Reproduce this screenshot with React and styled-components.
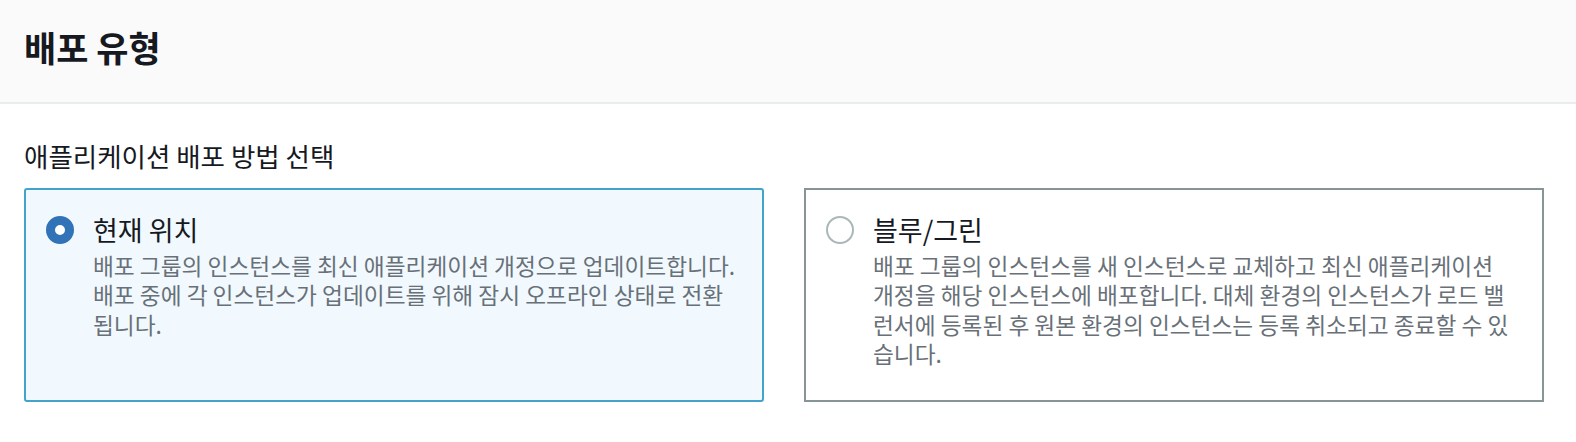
import React, { useState } from 'react'
import styled, { createGlobalStyle } from 'styled-components'

const GlobalStyle = createGlobalStyle`
  html, body {
    margin: 0;
    padding: 0;
    background: #ffffff;
  }
  body {
    font-family: "Noto Sans CJK KR", "Noto Sans", sans-serif;
    color: #16191f;
  }
`

// lines kept as in the console so the wrap matches
const options = [
  {
    id: 'in-place',
    title: '현재 위치',
    lines: [
      '배포 그룹의 인스턴스를 최신 애플리케이션 개정으로 업데이트합니다.',
      '배포 중에 각 인스턴스가 업데이트를 위해 잠시 오프라인 상태로 전환',
      '됩니다.',
    ],
  },
  {
    id: 'blue-green',
    title: '블루/그린',
    lines: [
      '배포 그룹의 인스턴스를 새 인스턴스로 교체하고 최신 애플리케이션',
      '개정을 해당 인스턴스에 배포합니다. 대체 환경의 인스턴스가 로드 밸',
      '런서에 등록된 후 원본 환경의 인스턴스는 등록 취소되고 종료할 수 있',
      '습니다.',
    ],
  },
]

function App() {
  const [selected, setSelected] = useState('in-place')

  return (
    <>
      <GlobalStyle />
      <Panel>
        <Header>
          <Heading>배포 유형</Heading>
        </Header>
        <Body>
          <Label>애플리케이션 배포 방법 선택</Label>
          <Tiles>
            {options.map((opt) => (
              <Tile
                key={opt.id}
                $active={selected === opt.id}
                onClick={() => setSelected(opt.id)}
              >
                <Radio $active={selected === opt.id} />
                <TileText>
                  <TileTitle>{opt.title}</TileTitle>
                  <TileDesc>
                    {opt.lines.map((line, i) => (
                      <DescLine key={i}>{line}</DescLine>
                    ))}
                  </TileDesc>
                </TileText>
              </Tile>
            ))}
          </Tiles>
        </Body>
      </Panel>
    </>
  )
}

const Panel = styled.div`
  width: 100%;
`

const Header = styled.div`
  height: 104px;
  background: #fafafa;
  border-bottom: 2px solid #eaeded;
  display: flex;
  align-items: center;
  padding: 0 24px 9px;
  box-sizing: border-box;
`

const Heading = styled.h2`
  margin: 0;
  font-size: 35px;
  font-weight: 700;
  line-height: 44px;
  color: #16191f;
`

const Body = styled.div`
  padding: 36px 32px 0 24px;
`

const Label = styled.div`
  font-size: 26.5px;
  line-height: 32px;
  color: #16191f;
  margin-bottom: 16px;
`

const Tiles = styled.div`
  display: grid;
  grid-template-columns: 1fr 1fr;
  column-gap: 40px;
`

const Tile = styled.div`
  display: flex;
  align-items: flex-start;
  gap: 19px;
  height: 214px;
  box-sizing: border-box;
  padding: 24px 20px;
  border: 2px solid ${(p) => (p.$active ? '#44a3cb' : '#879596')};
  border-radius: ${(p) => (p.$active ? '3px' : '0')};
  background: ${(p) => (p.$active ? '#f1f9fe' : '#ffffff')};
  cursor: pointer;
`

const Radio = styled.span`
  flex: none;
  width: 28px;
  height: 28px;
  margin-top: 2px;
  box-sizing: border-box;
  border-radius: 50%;
  border: ${(p) => (p.$active ? '9px solid #3273b7' : '2px solid #aab7b8')};
  background: #ffffff;
`

const TileText = styled.div`
  flex: 1;
  min-width: 0;
`

const TileTitle = styled.div`
  font-size: 27px;
  line-height: 32px;
  color: #16191f;
  margin-bottom: 5px;
`

const TileDesc = styled.div`
  font-size: 22.7px;
  line-height: 29.4px;
  color: #687078;
`

const DescLine = styled.span`
  display: block;
  white-space: nowrap;
`

export default App
